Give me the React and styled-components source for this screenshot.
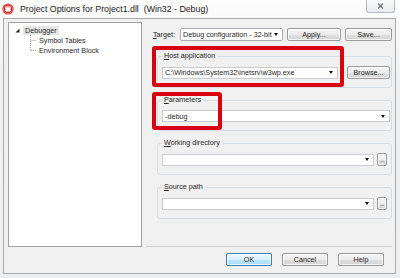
import styled, { createGlobalStyle } from 'styled-components';

const GlobalStyle = createGlobalStyle`
  html, body { margin: 0; padding: 0; }
  body {
    width: 400px;
    height: 278px;
    overflow: hidden;
    background: #f3f3f3;
    font-family: "Liberation Sans", Arial, sans-serif;
    color: #262626;
  }
`;

const Window = styled.div`
  width: 400px;
  height: 278px;
  box-sizing: border-box;
  display: flex;
  flex-direction: column;
  background: linear-gradient(#fcfcfc, #eef0f2 30%, #eceef0);
`;

const TitleBar = styled.div`
  height: 18px;
  flex: none;
  display: flex;
  align-items: center;
  padding-left: 2px;
`;

const TitleText = styled.span`
  margin-left: 6px;
  font-size: 8.8px;
  color: #222;
  white-space: pre;
`;

const CloseButton = styled.div`
  margin-left: auto;
  margin-right: 5px;
  align-self: flex-start;
  width: 29px;
  height: 13px;
  box-sizing: border-box;
  border: 1px solid #b3b8be;
  border-top: none;
  border-radius: 0 0 3px 3px;
  background: linear-gradient(#fafafa, #e9ebee);
  display: flex;
  align-items: center;
  justify-content: center;
`;

const Client = styled.div`
  flex: 1;
  margin: 0 4px 4px 3px;
  border: 1px solid #a9a9a9;
  background: #f0f0f0;
  display: flex;
  flex-direction: column;
`;

const MainRow = styled.div`
  display: flex;
  padding: 3px 0 0 4px;
`;

const Tree = styled.div`
  width: 134px;
  height: 225px;
  box-sizing: border-box;
  border: 1px solid #a3a3a3;
  background: #fff;
  padding-top: 2px;
  font-size: 7.2px;
`;

const TreeRow = styled.div`
  height: 10px;
  display: flex;
  align-items: center;
  padding-left: ${({ $indent }) => $indent}px;
`;

const TreeLabel = styled.span`
  padding: 0 2px;
  line-height: 9px;
  margin-left: ${({ $gap }) => $gap || 0}px;
  background: ${({ $selected }) => ($selected ? '#e6e6e6' : 'transparent')};
`;

const RightPanel = styled.div`
  position: relative;
  margin-left: 4px;
  width: 246px;
  height: 225px;
  box-sizing: border-box;
  border-bottom: 1px solid #cfcfcf;
`;

const TargetRow = styled.div`
  margin-top: 6px;
  height: 13px;
  display: flex;
  align-items: center;
  padding-left: 7px;
  font-size: 7.2px;
`;

const TargetLabel = styled.span`
  width: 27px;
  flex: none;
`;

const Underline = styled.span`
  text-decoration: underline;
`;

const Combo = styled.div`
  box-sizing: border-box;
  height: ${({ $h }) => $h || 12}px;
  width: ${({ $w }) => ($w ? `${$w}px` : 'auto')};
  flex: ${({ $w }) => ($w ? 'none' : '1')};
  border: 1px solid ${({ $flat }) => ($flat ? '#c8ccd2' : '#a9acb2')};
  background: #fff;
  display: flex;
  align-items: center;
  padding: 0 4px 0 2px;
  font-size: 7.2px;
  border-radius: ${({ $flat }) => ($flat ? 0 : 2)}px;
`;

const ComboText = styled.span`
  flex: 1;
  white-space: nowrap;
  overflow: hidden;
`;

const Arrow = styled.span`
  width: 0;
  height: 0;
  border-left: 2.5px solid transparent;
  border-right: 2.5px solid transparent;
  border-top: 3px solid #111;
`;

const Button = styled.div`
  box-sizing: border-box;
  width: ${({ $w }) => $w}px;
  height: ${({ $h }) => $h || 13}px;
  flex: none;
  margin-left: ${({ $ml }) => $ml || 0}px;
  border: 1px solid ${({ $default }) => ($default ? '#3c7fb1' : '#9a9a9a')};
  border-radius: 2px;
  background: ${({ $default }) =>
    $default
      ? 'linear-gradient(#eaf6fd, #d9f0fc 50%, #bee6fd 51%, #a7d9f5)'
      : 'linear-gradient(#f5f5f5, #ececec 50%, #dfdfdf 51%, #d4d4d4)'};
  box-shadow: inset 0 0 0 1px rgba(255, 255, 255, 0.7);
  display: flex;
  align-items: center;
  justify-content: center;
  font-size: 7.2px;
  color: #262626;
`;

const Group = styled.fieldset`
  margin: ${({ $mt }) => $mt}px 0 0 11px;
  padding: 0 1px 8px 4px;
  border: 1px solid #d5dce2;
  border-radius: 3px;
  min-width: 0;
`;

const Legend = styled.legend`
  padding: 0 2px;
  margin-left: 0;
  font-size: 7.2px;
  line-height: 8px;
`;

const FieldRow = styled.div`
  margin-top: 6px;
  display: flex;
  align-items: center;
  padding-left: ${({ $pl }) => $pl || 0}px;
  padding-right: ${({ $pr }) => $pr || 0}px;
`;

const Ellipsis = styled(Button)`
  font-size: 6px;
  align-items: flex-end;
  padding-bottom: 2px;
  letter-spacing: -0.5px;
`;

const Highlight = styled.div`
  position: absolute;
  left: ${({ $x }) => $x}px;
  top: ${({ $y }) => $y}px;
  width: ${({ $w }) => $w}px;
  height: ${({ $h }) => $h}px;
  box-sizing: border-box;
  border: 4px solid #d9000f;
  border-radius: 3px;
  pointer-events: none;
`;

const ButtonRow = styled.div`
  display: flex;
  justify-content: flex-end;
  gap: 10px;
  margin-top: 6px;
  padding-right: 11px;
`;

const AppIcon = () => (
  <svg width="12" height="12" viewBox="0 0 12 12">
    <circle cx="6" cy="6" r="5.6" fill="#d23232" />
    <circle cx="6" cy="6" r="4.6" fill="none" stroke="#f28b8b" strokeWidth="0.6" />
    <rect x="3.4" y="3.6" width="5.2" height="4.8" rx="0.6" fill="#fff" />
    <rect x="3.4" y="3.6" width="5.2" height="1.3" fill="#f4c1c1" />
  </svg>
);

const CloseGlyph = () => (
  <svg width="7" height="6" viewBox="0 0 7 6">
    <path d="M1 0.5 L6 5.5 M6 0.5 L1 5.5" stroke="#6b6b6b" strokeWidth="1.1" />
  </svg>
);

const Expander = () => (
  <svg width="5" height="5" viewBox="0 0 5 5">
    <path d="M4.5 0.5 L4.5 4.5 L0.5 4.5 Z" fill="#262626" />
  </svg>
);

const TreeLine = ({ last }) => (
  <svg width="7" height="10" viewBox="0 0 7 10">
    <path
      d={last ? 'M0.5 0 V5.5 H6' : 'M0.5 0 V10 M0.5 5.5 H6'}
      stroke="#a0a0a0"
      strokeWidth="1"
      strokeDasharray="1 1"
      fill="none"
    />
  </svg>
);

const Field = ({ label, accel, value, mt, pl, pr, browse, dots }) => (
  <Group $mt={mt}>
    <Legend>
      <Underline>{accel}</Underline>
      {label}
    </Legend>
    <FieldRow $pl={pl} $pr={pr}>
      <Combo $flat>
        <ComboText>{value}</ComboText>
        <Arrow />
      </Combo>
      {browse && (
        <Button $w={43} $ml={9}>
          Browse...
        </Button>
      )}
      {dots && (
        <Ellipsis $w={10} $ml={3}>
          ...
        </Ellipsis>
      )}
    </FieldRow>
  </Group>
);

export default function App() {
  return (
    <>
      <GlobalStyle />
      <Window>
        <TitleBar>
          <AppIcon />
          <TitleText>Project Options for Project1.dll  (Win32 - Debug)</TitleText>
          <CloseButton>
            <CloseGlyph />
          </CloseButton>
        </TitleBar>
        <Client>
          <MainRow>
            <Tree>
              <TreeRow $indent={6}>
                <Expander />
                <TreeLabel $selected $gap={3}>Debugger</TreeLabel>
              </TreeRow>
              <TreeRow $indent={21}>
                <TreeLine />
                <TreeLabel>Symbol Tables</TreeLabel>
              </TreeRow>
              <TreeRow $indent={21}>
                <TreeLine last />
                <TreeLabel>Environment Block</TreeLabel>
              </TreeRow>
            </Tree>
            <RightPanel>
              <TargetRow>
                <TargetLabel>
                  <Underline>T</Underline>arget:
                </TargetLabel>
                <Combo $w={103} $h={13}>
                  <ComboText>Debug configuration - 32-bit</ComboText>
                  <Arrow />
                </Combo>
                <Button $w={54} $ml={4}>Apply...</Button>
                <Button $w={47} $ml={4}>Save...</Button>
              </TargetRow>
              <Field
                mt={11}
                accel="H"
                label="ost application"
                value="C:\Windows\System32\inetsrv\w3wp.exe"
                browse
              />
              <Field mt={8} accel="P" label="arameters" value="-debug" />
              <Field mt={8} accel="W" label="orking directory" value="" dots pr={3} />
              <Field mt={8} accel="S" label="ource path" value="" dots pr={3} />
              <Highlight $x={6} $y={24} $w={192} $h={41} />
              <Highlight $x={6} $y={70} $w={70} $h={38} />
            </RightPanel>
          </MainRow>
          <ButtonRow>
            <Button $w={46} $default>OK</Button>
            <Button $w={46}>Cancel</Button>
            <Button $w={46}>Help</Button>
          </ButtonRow>
        </Client>
      </Window>
    </>
  );
}
